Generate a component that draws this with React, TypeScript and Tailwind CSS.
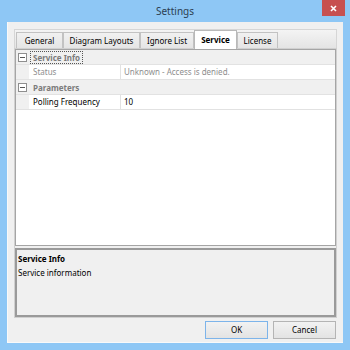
import React from 'react';

const tabs = [
  { label: 'General', w: 'w-[47px]' },
  { label: 'Diagram Layouts', w: 'w-[77px]' },
  { label: 'Ignore List', w: 'w-[54px]' },
  { label: 'Service', w: 'w-[43px]', active: true },
  { label: 'License', w: 'w-[41px]' },
];

const MinusBox = () => (
  <div className="w-[9px] h-[9px] border border-[#8e8e8e] bg-white flex items-center justify-center">
    <div className="w-[5px] h-px bg-[#555]" />
  </div>
);

const CategoryRow = ({ label, focused }: { label: string; focused?: boolean }) => (
  <div className="flex h-[15px] bg-[#f0f0f0] border-b border-[#e2e2e2] items-center">
    <div className="w-[13px] flex items-center justify-end pr-[2px]">
      <MinusBox />
    </div>
    <span
      className={`ml-[1px] px-[2px] leading-[11px] font-bold text-[#7b7b7b] ${
        focused ? 'border border-dotted border-[#555]' : 'border border-transparent'
      }`}
    >
      {label}
    </span>
  </div>
);

const PropRow = ({ name, value, dim }: { name: string; value: string; dim?: boolean }) => (
  <div className="flex h-[15px] border-b border-[#e2e2e2]">
    <div className="w-[13px] bg-[#f0f0f0]" />
    <div className={`w-[92px] border-r border-[#e2e2e2] pl-[4px] flex items-center ${dim ? 'text-[#8e8e8e]' : 'text-black'}`}>
      {name}
    </div>
    <div className={`flex-1 pl-[3px] flex items-center ${dim ? 'text-[#8e8e8e]' : 'text-black'}`}>{value}</div>
  </div>
);

const Button = ({ label, primary }: { label: string; primary?: boolean }) => (
  <div
    className={`w-[63px] h-[18px] flex items-center justify-center border bg-gradient-to-b from-[#f2f2f2] to-[#e3e3e3] ${
      primary ? 'border-[#7db4ea]' : 'border-[#b4b4b4]'
    }`}
  >
    {label}
  </div>
);

export default function App() {
  return (
    <div
      className="w-[350px] h-[350px] bg-[#8ec7f5] flex flex-col text-[8px] text-black"
      style={{ fontFamily: '"Noto Sans", "Open Sans", sans-serif' }}
    >
      {/* Title bar */}
      <div className="h-[22px] relative flex items-center justify-center">
        <span className="text-[10px] text-[#2c3e50] mt-[1px]">Settings</span>
        <div className="absolute right-[5px] top-0 w-[23px] h-[16px] bg-[#c75050] flex items-center justify-center">
          <svg width="7" height="7" viewBox="0 0 7 7">
            <path d="M1 1 L6 6 M6 1 L1 6" stroke="white" strokeWidth="1.6" />
          </svg>
        </div>
      </div>

      {/* Client area */}
      <div className="mx-[7px] mb-[7px] flex-1 bg-[#f0f0f0] border-l border-b border-[#f9f9f9] flex flex-col px-[6px] pt-[7px] pb-[3px]">
        {/* Tab strip */}
        <div className="h-[19px] flex items-end pl-[1px] border border-b-0 border-[#d6d6d6] bg-gradient-to-b from-[#f4f4f4] to-[#e4e4e4]">
          {tabs.map((t) =>
            t.active ? (
              <div
                key={t.label}
                className={`${t.w} h-[19px] -mb-px relative z-10 bg-white border border-b-0 border-[#b9b9b9] flex items-center justify-center font-bold`}
              >
                {t.label}
              </div>
            ) : (
              <div
                key={t.label}
                className={`${t.w} h-[16px] border border-b-0 border-[#c2c2c2] bg-gradient-to-b from-[#f1f1f1] to-[#e5e5e5] flex items-center justify-center`}
              >
                {t.label}
              </div>
            )
          )}
        </div>

        {/* Tab page */}
        <div className="flex-1 border border-[#d0d0d0] bg-[#f0f0f0] flex flex-col">
          {/* Property grid */}
          <div className="h-[197px] border border-[#a5a5a5] bg-white flex flex-col">
            <CategoryRow label="Service Info" focused />
            <PropRow name="Status" value="Unknown - Access is denied." dim />
            <CategoryRow label="Parameters" />
            <PropRow name="Polling Frequency" value="10" />
          </div>

          {/* Help panel */}
          <div className="mt-[2px] flex-1 border-2 border-[#9a9a9a] bg-[#f0f0f0] px-[1px] pt-[3px] flex flex-col gap-[2px]">
            <span className="font-bold leading-[12px]">Service Info</span>
            <span className="leading-[12px]">Service information</span>
          </div>
        </div>

        {/* Buttons */}
        <div className="mt-[3px] flex justify-end gap-[5px] pr-[1px]">
          <Button label="OK" primary />
          <Button label="Cancel" />
        </div>
      </div>
    </div>
  );
}
